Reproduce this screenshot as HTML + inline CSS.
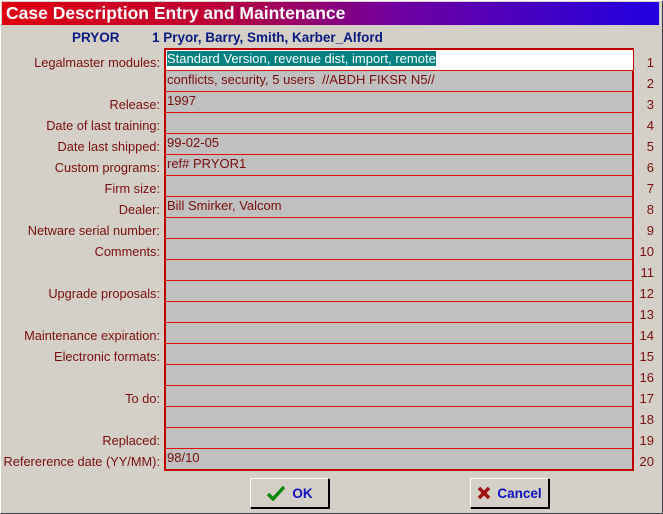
<!DOCTYPE html>
<html><head><style>
body{margin:0;width:663px;height:514px;background:#d4d0c8;font-family:"Liberation Sans",Arial,sans-serif;position:relative;overflow:hidden}
.title{position:absolute;left:2px;top:2px;width:657px;height:23px;background:linear-gradient(90deg,#e00010 0%,#c00030 30%,#7000a0 60%,#2000e0 100%);color:#fff;font-weight:bold;font-size:17.5px;line-height:23px;padding-left:4px;box-sizing:border-box}
.win{position:absolute;left:0;top:0;width:663px;height:514px;box-sizing:border-box;border:1px solid #fff;border-right-color:#404040;border-bottom-color:#404040}
.hdr{position:absolute;top:30px;color:#0a1a80;font-weight:bold;font-size:13.5px}
.lab{position:absolute;right:503px;color:#7a0e0e;font-size:12.8px;white-space:nowrap}
.num{position:absolute;left:634px;width:20px;text-align:right;color:#7a0e0e;font-size:13px}
.box{position:absolute;left:164px;top:48px;width:470px;height:423px;box-sizing:border-box;border:2px solid #c00000;background:#c0c0c0}
.row{position:absolute;left:0;width:466px;height:20px;border-bottom:1px solid #e01010;font-size:13px;color:#7a0e0e;line-height:17px;padding-left:1px;box-sizing:content-box;white-space:nowrap}
.btn{position:absolute;top:478px;height:30px;box-sizing:border-box;border:1px solid #000;border-top-color:#fff;border-left-color:#fff;box-shadow:1px 1px 0 #000;background:#d4d0c8;color:#1010c0;font-weight:bold;font-size:13.5px;display:flex;align-items:center;justify-content:center;gap:6px}
</style></head><body>
<div class="win"></div>
<div class="title">Case Description Entry and Maintenance</div>
<div class="hdr" style="left:72px">PRYOR</div>
<div class="hdr" style="left:152px">1 Pryor, Barry, Smith, Karber_Alford</div>
<div class="box">
<div class="row" style="top:0;background:#fff"><span style="background:#008080;color:#fff">Standard Version, revenue dist, import, remote</span></div>
<div class="row" style="top:21px">conflicts, security, 5 users &nbsp;//ABDH FIKSR N5//</div>
<div class="row" style="top:42px">1997</div>
<div class="row" style="top:63px"></div>
<div class="row" style="top:84px">99-02-05</div>
<div class="row" style="top:105px">ref# PRYOR1</div>
<div class="row" style="top:126px"></div>
<div class="row" style="top:147px">Bill Smirker, Valcom</div>
<div class="row" style="top:168px"></div>
<div class="row" style="top:189px"></div>
<div class="row" style="top:210px"></div>
<div class="row" style="top:231px"></div>
<div class="row" style="top:252px"></div>
<div class="row" style="top:273px"></div>
<div class="row" style="top:294px"></div>
<div class="row" style="top:315px"></div>
<div class="row" style="top:336px"></div>
<div class="row" style="top:357px"></div>
<div class="row" style="top:378px"></div>
<div class="row" style="top:399px;border-bottom:none">98/10</div>
</div>
<div class="lab" style="top:55px">Legalmaster modules:</div>
<div class="lab" style="top:97px">Release:</div>
<div class="lab" style="top:118px">Date of last training:</div>
<div class="lab" style="top:139px">Date last shipped:</div>
<div class="lab" style="top:160px">Custom programs:</div>
<div class="lab" style="top:181px">Firm size:</div>
<div class="lab" style="top:202px">Dealer:</div>
<div class="lab" style="top:223px">Netware serial number:</div>
<div class="lab" style="top:244px">Comments:</div>
<div class="lab" style="top:286px">Upgrade proposals:</div>
<div class="lab" style="top:328px">Maintenance expiration:</div>
<div class="lab" style="top:349px">Electronic formats:</div>
<div class="lab" style="top:391px">To do:</div>
<div class="lab" style="top:433px">Replaced:</div>
<div class="lab" style="top:454px">Refererence date (YY/MM):</div>
<div class="num" style="top:55px">1</div><div class="num" style="top:76px">2</div><div class="num" style="top:97px">3</div><div class="num" style="top:118px">4</div><div class="num" style="top:139px">5</div><div class="num" style="top:160px">6</div><div class="num" style="top:181px">7</div><div class="num" style="top:202px">8</div><div class="num" style="top:223px">9</div><div class="num" style="top:244px">10</div><div class="num" style="top:265px">11</div><div class="num" style="top:286px">12</div><div class="num" style="top:307px">13</div><div class="num" style="top:328px">14</div><div class="num" style="top:349px">15</div><div class="num" style="top:370px">16</div><div class="num" style="top:391px">17</div><div class="num" style="top:412px">18</div><div class="num" style="top:433px">19</div><div class="num" style="top:454px">20</div>
<div class="btn" style="left:250px;width:79px"><svg width="20" height="16" viewBox="0 0 20 16"><path d="M2 9 L7 14 L18 2" stroke="#0a8a0a" stroke-width="3.5" fill="none"/></svg>OK</div>
<div class="btn" style="left:470px;width:79px"><svg width="14" height="14" viewBox="0 0 14 14"><path d="M2 2 L12 12 M12 2 L2 12" stroke="#a01010" stroke-width="3.5"/></svg>Cancel</div>
</body></html>
